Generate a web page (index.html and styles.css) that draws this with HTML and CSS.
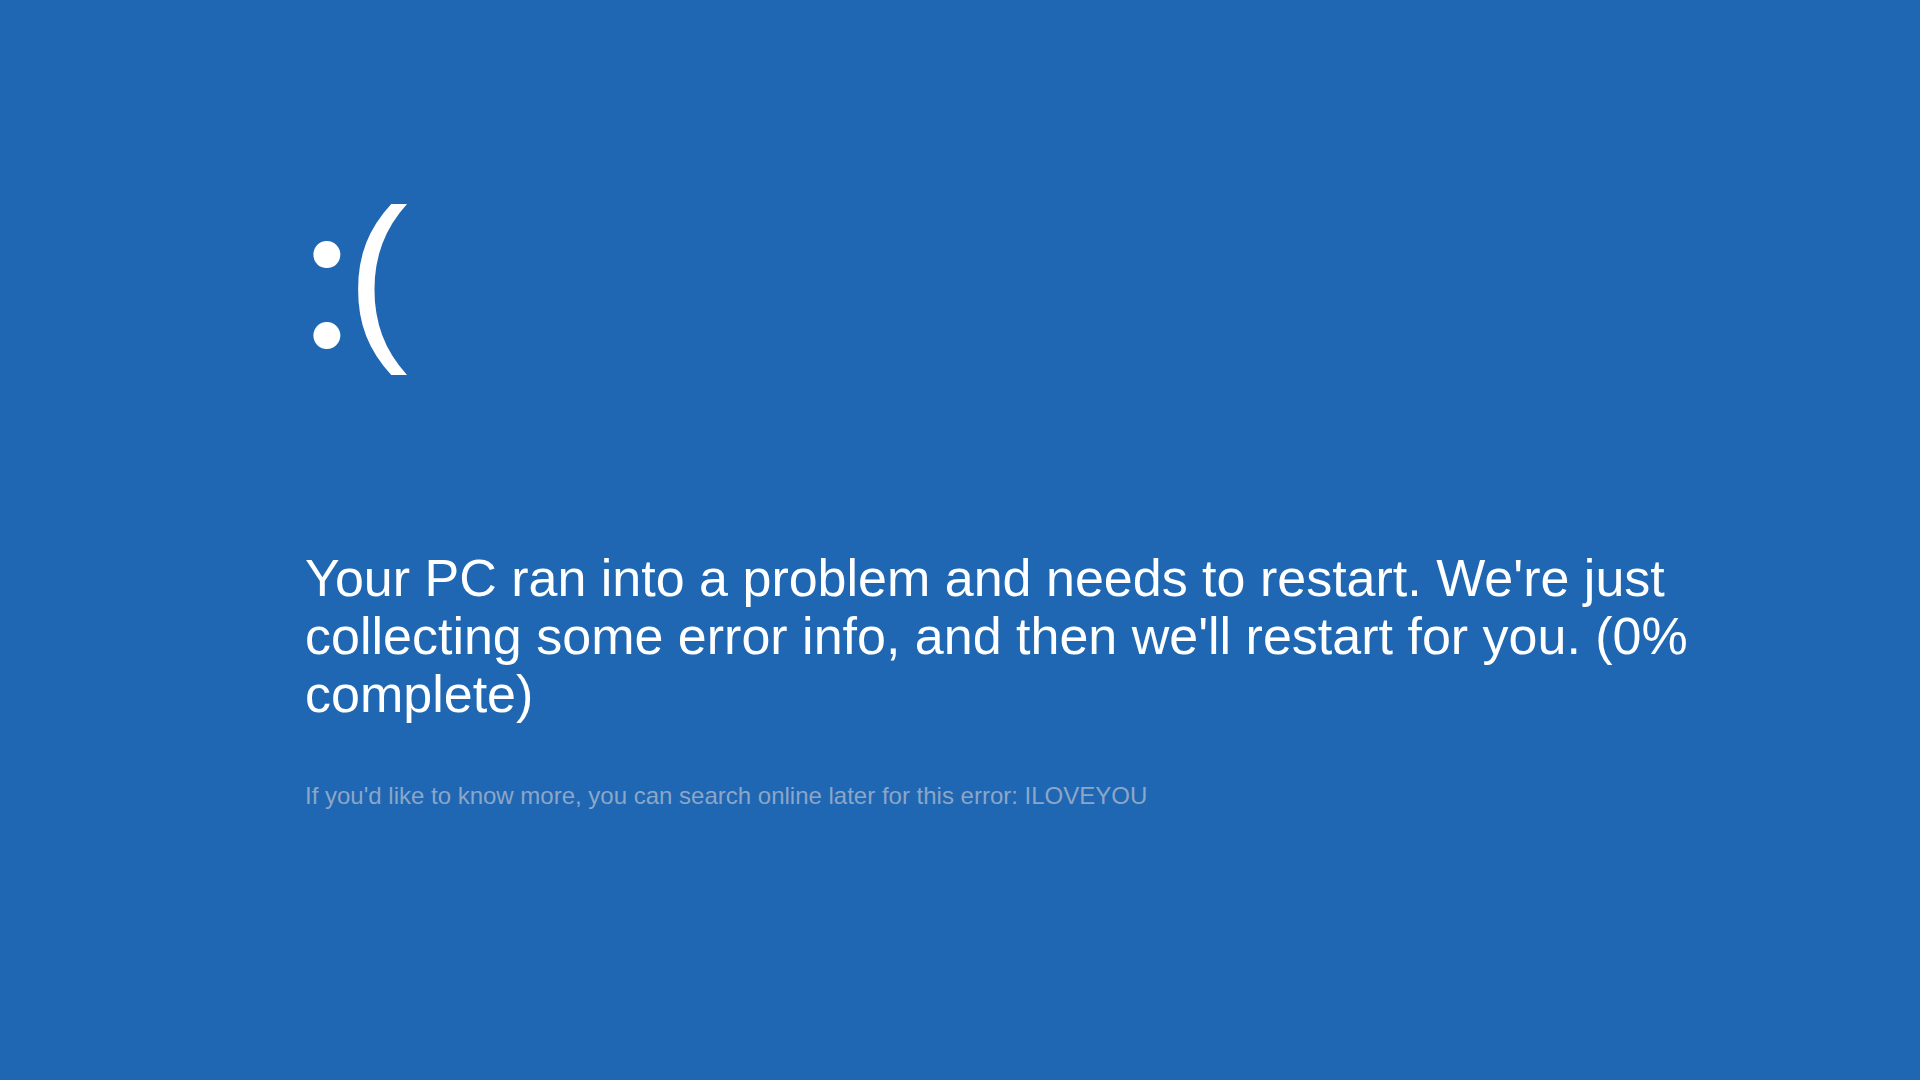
FILE: index.html
```html
<!DOCTYPE html>
<html lang="en">
<head>
<meta charset="utf-8">
<title>Your PC ran into a problem</title>
<link rel="stylesheet" href="styles.css">
</head>
<body>
<main class="screen">
  <div class="face"><span class="colon">:</span><span class="paren">(</span></div>
  <p class="message">Your PC ran into a problem and needs to restart. We're just collecting some error info, and then we'll restart for you. (0% complete)</p>
  <p class="hint">If you'd like to know more, you can search online later for this error: ILOVEYOU</p>
</main>
</body>
</html>
```

FILE: styles.css
```css
html, body {
  margin: 0;
  padding: 0;
  height: 100%;
  background: #1f67b2;
}
.screen {
  box-sizing: border-box;
  height: 100vh;
  padding: 181px 0 0 305px;
  display: flex;
  flex-direction: column;
  font-family: "Liberation Sans", Arial, sans-serif;
  color: #ffffff;
}
.face {
  margin-left: -5px;
  font-size: 184px;
  line-height: 184px;
  height: 184px;
  white-space: nowrap;
}
.colon {
  font-family: Lato, "Liberation Sans", sans-serif;
  font-size: 215px;
  line-height: 0;
  vertical-align: -10px;
  letter-spacing: -7px;
}
.paren {
  font-family: "Liberation Sans", Arial, sans-serif;
}
.message {
  margin: 184px 0 0 0;
  max-width: 1400px;
  font-size: 52px;
  line-height: 58px;
}
.hint {
  margin: 59.3px 0 0 0;
  font-size: 24px;
  color: #8ca6c8;
}
```
